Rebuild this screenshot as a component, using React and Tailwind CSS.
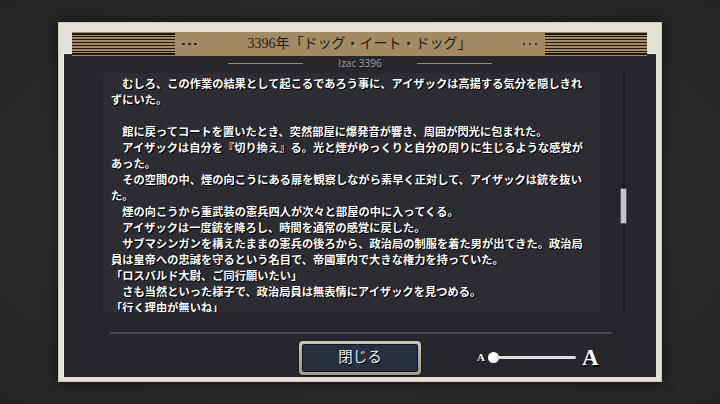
import React from "react";

const storyLines = [
  "　むしろ、この作業の結果として起こるであろう事に、アイザックは高揚する気分を隠しきれ",
  "ずにいた。",
  "\u00a0",
  "　館に戻ってコートを置いたとき、突然部屋に爆発音が響き、周囲が閃光に包まれた。",
  "　アイザックは自分を『切り換え』る。光と煙がゆっくりと自分の周りに生じるような感覚が",
  "あった。",
  "　その空間の中、煙の向こうにある扉を観察しながら素早く正対して、アイザックは銃を抜い",
  "た。",
  "　煙の向こうから重武装の憲兵四人が次々と部屋の中に入ってくる。",
  "　アイザックは一度銃を降ろし、時間を通常の感覚に戻した。",
  "　サブマシンガンを構えたままの憲兵の後ろから、政治局の制服を着た男が出てきた。政治局",
  "員は皇帝への忠誠を守るという名目で、帝國軍内で大きな権力を持っていた。",
  "「ロスバルド大尉、ご同行願いたい」",
  "　さも当然といった様子で、政治局員は無表情にアイザックを見つめる。",
  "「行く理由が無いね」",
];

const serif = "font-['Liberation_Serif','Noto_Sans_CJK_JP',serif]";

const Stripes = ({ width }) => (
  <div className={`${width} h-full flex flex-col justify-between py-[1px]`}>
    {[0, 1, 2, 3, 4, 5, 6, 7].map((i) => (
      <div key={i} className="h-[1.5px] bg-[#1c1a17]" />
    ))}
  </div>
);

const Dots = () => (
  <div className="flex gap-[3.5px]">
    <span className="w-[2.5px] h-[2.5px] rounded-full bg-[#1c1a17]" />
    <span className="w-[2.5px] h-[2.5px] rounded-full bg-[#1c1a17]" />
    <span className="w-[2.5px] h-[2.5px] rounded-full bg-[#1c1a17]" />
  </div>
);

const App = () => {
  return (
    <div className="w-[720px] h-[404px] flex items-center justify-center bg-[radial-gradient(ellipse_at_center,#343434_0%,#2a2a2a_60%,#242424_100%)]">
      {/* Frame */}
      <div className="w-[604px] h-[360px] flex flex-col bg-[#e5e0d8] border border-[#cdc7bd] shadow-[0_0_12px_rgba(0,0,0,0.6)]">
        {/* Header */}
        <div className="relative z-10 mt-[9px] ml-[13px] mr-[14px] h-[24px] flex items-center bg-[#a48a63]">
          <Stripes width="w-[103px]" />
          <div className="ml-[7px]">
            <Dots />
          </div>
          <div className={`flex-1 text-center text-[14px] leading-none text-[#1a1815] ${serif}`}>
            3396年「ドッグ・イート・ドッグ」
          </div>
          <div className="mr-[8px]">
            <Dots />
          </div>
          <Stripes width="w-[102px]" />
        </div>

        {/* Dark panel */}
        <div className="-mt-[3px] ml-[4px] mr-[5px] mb-[4px] flex-1 flex flex-col bg-[#26272c] border-l border-t border-[#f4f2ee]">
          {/* Speaker label */}
          <div className="mt-[3px] h-[12px] flex items-center justify-center gap-[35px]">
            <div className="w-[75px] h-px bg-[#8a8d93]" />
            <span className="text-[10px] leading-none text-[#9c9fa5] font-['Open_Sans',sans-serif]">Izac 3396</span>
            <div className="w-[75px] h-px bg-[#8a8d93]" />
          </div>

          {/* Text + scrollbar */}
          <div className="mt-[4px] ml-[39px] flex gap-[20px]">
            <div className={`w-[497px] h-[239px] overflow-hidden bg-[#2c2d32] pl-[8px] pt-[3px] text-[11.25px] font-bold text-white ${serif} [text-shadow:1px_1px_0_#000,1px_0_0_#000]`}>
              {storyLines.map((line, i) => (
                <div key={i} className="h-4 leading-4 whitespace-nowrap">
                  {line}
                </div>
              ))}
            </div>
            <div className="relative w-[7px] -mt-[3px] h-[245px] flex justify-center">
              <div className="w-[4px] h-full bg-[#1f2024]" />
              <div className="absolute left-0 top-[118px] w-[7px] h-[36px] rounded-[1px] bg-[#c7c7c7] border border-[#555]" />
            </div>
          </div>

          {/* Separator */}
          <div className="mt-[17px] ml-[46px] mr-[44px] h-[1.5px] bg-[#474c54]" />

          {/* Bottom row */}
          <div className="mt-[7px] grid grid-cols-[1fr_122px_1fr] items-center">
            <div />
            <button className="w-[122px] h-[34px] rounded-[4px] p-[3px] bg-[linear-gradient(180deg,#c9c4b8,#9c978b)] shadow-[0_1px_2px_rgba(0,0,0,0.6)]">
              <div className={`w-full h-full rounded-[2px] bg-[#27303f] border border-[#121418] flex items-center justify-center text-[14.5px] text-[#eeeeee] ${serif} [text-shadow:1px_1px_0_#000]`}>
                閉じる
              </div>
            </button>
            <div className={`pl-[56px] flex items-center text-white font-bold ${serif} [text-shadow:1px_1px_0_#000]`}>
              <span className="text-[11px] leading-none">A</span>
              <div className="ml-[3px] w-[11px] h-[11px] rounded-full bg-white" />
              <div className="-ml-[2px] w-[79px] h-[3px] rounded-full bg-[#dedede]" />
              <span className="ml-[6px] text-[23px] leading-none [text-shadow:1.5px_1.5px_0_#000]">A</span>
            </div>
          </div>
        </div>
      </div>
    </div>
  );
};

export default App;
